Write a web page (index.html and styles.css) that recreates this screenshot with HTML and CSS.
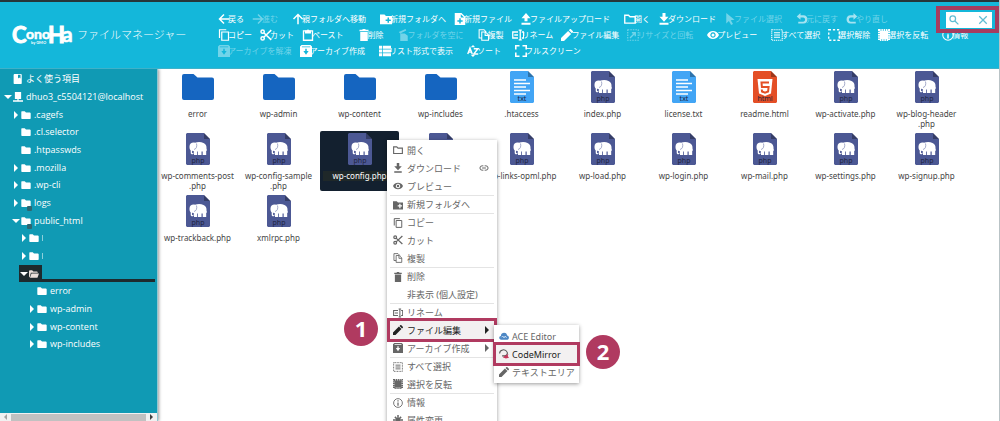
FILE: index.html
```html
<!DOCTYPE html>
<html lang="ja">
<head>
<meta charset="utf-8">
<title>ファイルマネージャー</title>
<link rel="stylesheet" href="styles.css">
</head>
<body>
<svg class="sprite" aria-hidden="true">
  <symbol id="back" viewBox="0 0 16 16"><path d="M15 8H2M8 2L2 8l6 6" fill="none" stroke="currentColor" stroke-width="2"/></symbol>
  <symbol id="fwd" viewBox="0 0 16 16"><path d="M1 8h13M8 2l6 6-6 6" fill="none" stroke="currentColor" stroke-width="2"/></symbol>
  <symbol id="up" viewBox="0 0 16 16"><path d="M8 15V2M2 8l6-6 6 6" fill="none" stroke="currentColor" stroke-width="2"/></symbol>
  <symbol id="newfolder" viewBox="0 0 16 16"><path fill-rule="evenodd" d="M0 2h6l2 2h8v11H0zM10 6v2.500H7.500v2H10V13h2v-2.500h2.500v-2H12V6z"/></symbol>
  <symbol id="newfile" viewBox="0 0 16 16"><path fill-rule="evenodd" d="M1 0h9l5 5v11H1zM9 1.500V6h4.500zM7 7v2.500H4.500v2H7V14h2v-2.500h2.500v-2H9V7z"/></symbol>
  <symbol id="upload" viewBox="0 0 16 16"><path d="M8 0l6 7h-4v4H6V7H2zM2 13h12v2.500H2z"/></symbol>
  <symbol id="download" viewBox="0 0 16 16"><path d="M6 0h4v5h4l-6 6.500L2 5h4zM2 13h12v2.500H2z"/></symbol>
  <symbol id="open" viewBox="0 0 16 16"><path d="M1 13.500V3h5l2 2h7v8.500z" fill="none" stroke="currentColor" stroke-width="1.800"/></symbol>
  <symbol id="cursor" viewBox="0 0 16 16"><path d="M3 0l11 9-5 .5 3 5-2.500 1.500-3-5.500L3 14z"/></symbol>
  <symbol id="undo" viewBox="0 0 16 16"><path d="M6 0v3h4c7 0 7 11 0 11H3v-2.500h6.500c3.500 0 3.500-5.500 0-5.500H6v3L1 4.500z"/></symbol>
  <symbol id="redo" viewBox="0 0 16 16"><path d="M10 0v3H6c-7 0-7 11 0 11h7v-2.500H6.500C3 11.500 3 6 6.500 6H10v3l5-4.500z"/></symbol>
  <symbol id="copy" viewBox="0 0 16 16"><path d="M5 4h9v11H5zM2 12V1h9" fill="none" stroke="currentColor" stroke-width="1.600"/></symbol>
  <symbol id="cut" viewBox="0 0 16 16"><g fill="none" stroke="currentColor" stroke-width="2"><circle cx="3.500" cy="3.500" r="2.200"/><circle cx="3.500" cy="12.500" r="2.200"/><path d="M5 5l10 9.500M5 11L15 1.500"/></g></symbol>
  <symbol id="paste" viewBox="0 0 16 16"><path d="M2 2.500h12V15H2z" fill="none" stroke="currentColor" stroke-width="1.800"/><path d="M4 2h2.500a1.500 1.500 0 0 1 3 0H12v4H4z"/></symbol>
  <symbol id="trash" viewBox="0 0 16 16"><path d="M2 1h3.500l1-1h3l1 1H14v2H2zM3 4h10v12H3z"/></symbol>
  <symbol id="empty" viewBox="0 0 16 16"><path d="M1 4l9-4 1 2-8 4zM3 6h6l4 3v7H3z"/></symbol>
  <symbol id="dup" viewBox="0 0 16 16"><path d="M5 12H1.500V1H8l3 3M5 4h5l4 4v7H5zM9.500 4v4.500H14" fill="none" stroke="currentColor" stroke-width="1.400"/></symbol>
  <symbol id="rename" viewBox="0 0 16 16"><path d="M8 4H1v8h7M3 8h5M9 1.500h4M9 14.500h4M11 1.500v13M13 4h2.500v8H13" fill="none" stroke="currentColor" stroke-width="1.700"/></symbol>
  <symbol id="pencil" viewBox="0 0 16 16"><path d="M0 16v-4L9.500 2.500l4 4L4 16zM10.500 1.500L12 0h1l3 3v1l-1.500 1.500z"/></symbol>
  <symbol id="resize" viewBox="0 0 16 16"><path d="M1 1h14v14H1z" fill="none" stroke="currentColor" stroke-width="1.500" stroke-dasharray="2 1.400"/><path d="M4 12l7-7M6.500 5H11v4.500" fill="none" stroke="currentColor" stroke-width="1.800"/></symbol>
  <symbol id="eye" viewBox="0 0 16 16"><path fill-rule="evenodd" d="M0 8c3-7 13-7 16 0-3 7-13 7-16 0zM8 4.400a3.600 3.600 0 1 0 .01 0z"/><circle cx="8" cy="8" r="2"/></symbol>
  <symbol id="selall" viewBox="0 0 16 16"><path d="M1 1h14v14H1z" fill="none" stroke="currentColor" stroke-width="1.500" stroke-dasharray="1.500 1"/><path d="M4 5h8M4 8h8M4 11h8" stroke="currentColor" stroke-width="1.500"/></symbol>
  <symbol id="selnone" viewBox="0 0 16 16"><path d="M1 1h14v14H1z" fill="none" stroke="currentColor" stroke-width="1.800" stroke-dasharray="3 2.500"/></symbol>
  <symbol id="selinv" viewBox="0 0 16 16"><path d="M2.500 2.500h11v11h-11z"/><path d="M1.500 1.500h13v13h-13z" fill="none" stroke="currentColor" stroke-width="3" stroke-dasharray="2 1"/></symbol>
  <symbol id="info" viewBox="0 0 16 16"><circle cx="8" cy="8" r="7" fill="none" stroke="currentColor" stroke-width="1.400"/><path d="M7 3.500h2v2H7zM7 7h2v5.500H7z"/></symbol>
  <symbol id="archive" viewBox="0 0 16 16"><path fill-rule="evenodd" d="M2 0h12l2 2v14H0V2zM2.500 2v1h11V2zM7 5v3H4.500L8 13l3.500-5H9V5z"/></symbol>
  <symbol id="list" viewBox="0 0 16 16"><path d="M0 1h4v4H0zM5 1h11v4H5zM0 6h4v4H0zM5 6h11v4H5zM0 11h4v4H0zM5 11h11v4H5z"/></symbol>
  <symbol id="sort" viewBox="0 0 16 16"><path d="M1 12L4 4l3 8M2 9.500h4M9 5h5.500L9 12h6" fill="none" stroke="currentColor" stroke-width="1.900"/><path d="M8 0l3 3H5zM8 16l3-3H5z"/></symbol>
  <symbol id="full" viewBox="0 0 16 16"><path d="M1 6V1h5M10 1h5v5M15 10v5h-5M6 15H1v-5" fill="none" stroke="currentColor" stroke-width="2.200"/></symbol>
  <symbol id="attr" viewBox="0 0 16 16"><path d="M8 0v16M0 8h16M3 3l10 10M13 3L3 13" stroke="currentColor" stroke-width="2.400"/></symbol>
  <symbol id="link" viewBox="0 0 16 16"><path d="M7 4.500H5a3.500 3.500 0 0 0 0 7h2M9 4.500h2a3.500 3.500 0 0 1 0 7H9M5 8h6" fill="none" stroke="currentColor" stroke-width="1.600"/></symbol>
  <symbol id="folder" viewBox="0 0 16 16"><path d="M1 2h5l2 2h6.500l1 1v8.500l-1 1H1.500l-1-1V3z"/></symbol>
  <symbol id="folderopen" viewBox="0 0 16 16"><path d="M0 3l1-1h4l2 2h6l1 1v1H3L1 13H0zM4 7h12l-2.500 7H1.500z"/></symbol>
  <symbol id="book" viewBox="0 0 16 16"><path fill-rule="evenodd" d="M2 0h11l1 1v14l-1 1H2l-1-1V1zM8 1v6l2-1.500L12 7V1z"/></symbol>
  <symbol id="server" viewBox="0 0 16 16"><path d="M3 0h10v11H3zM7 11h2v2h7v2.500H0V13h7z"/></symbol>
  <symbol id="bigfolder" viewBox="0 0 32 26"><path d="M2 0h9.500l4 3.500H30a2 2 0 0 1 2 2V24a2 2 0 0 1-2 2H2a2 2 0 0 1-2-2V2a2 2 0 0 1 2-2z"/></symbol>
  <symbol id="page" viewBox="0 0 24 32"><path d="M1 0h17l6 6v25l-1 1H1l-1-1V1z"/><path d="M18 0v6h6z" fill="#000" opacity=".3"/></symbol>
  <symbol id="php" viewBox="0 0 24 32"><use href="#page"/><path fill="#fff" d="M3.500 13.500C3.500 10.500 6 9 9 9.700c2.500-.8 6-.9 8.500.2 2.500 1 3.200 3.200 3 5.600l.5 2-.8.300V22h-3.500v-3.500h-1.200V22H12v-3.500h-.8V22H8v-3.800c-1.200.2-1.600-.3-2-1v2.300c0 1 1 .8 1 .1l.7.2c-.2 2.200-3 2-3-.1v-2.300c-1.200-1-1.200-2.500-1.200-3.900z"/><path d="M10.500 10.500c.8 3-.2 5.500-2.500 6" fill="none" stroke="#4c5894" stroke-width=".5"/><text class="ext" x="12" y="29.500">php</text></symbol>
  <symbol id="txt" viewBox="0 0 24 32"><use href="#page"/><path d="M4 9h12M4 12.500h16M4 16h12M4 19.500h16M4 23h12" stroke="#fff" stroke-width="1.600"/><text class="ext" x="12" y="29.500">txt</text></symbol>
  <symbol id="html" viewBox="0 0 24 32"><use href="#page"/><path fill="#fff" d="M4.500 8h15L18 22.500 12 25l-6-2.500z"/><path d="M16 11.500H8.500l.4 4.500h6.700l-.5 4.500-3.100 1.200-3-1.200-.2-2" fill="none" stroke="#e44f26" stroke-width="2"/><text class="ext" x="12" y="29.500">html</text></symbol>
  <symbol id="cloud" viewBox="0 0 16 16"><path d="M3 14C-1 13 0 8 3 8c0-6 9-7 10-1 4 1 4 7-1 7z" fill="#4d87c4"/><path d="M4 10l2-2 2 3 2-3 2 3" fill="none" stroke="#dcebfa" stroke-width="1.300"/></symbol>
  <symbol id="mirror" viewBox="0 0 16 16"><path d="M1 7C1 1 10-1 13 5c1 3 0 5-3 6H5" fill="none" stroke="#555" stroke-width="1.700"/><path d="M9 11l6-3-1 3 2 3-5 1-5-2z" fill="#c5375b"/></symbol>
</svg>

<div class="app">
  <header class="header">
    <div class="brand">
      <svg class="logo" viewBox="0 0 60 20" role="img" aria-label="ConoHa by GMO">
        <text class="logo-c" x="-1" y="18">C</text>
        <text class="logo-ono" x="13" y="14">ono</text>
        <text class="logo-h" x="35" y="18">H</text>
        <text class="logo-a" x="49" y="17">a</text>
        <text class="logo-by" x="18" y="19">by GMO</text>
      </svg>
      <h1 class="title">ファイルマネージャー</h1>
    </div>
    <div class="toolbar" role="toolbar">
      <div class="group"><button class="tool"><svg><use href="#back"/></svg>戻る</button><button class="tool" disabled><svg><use href="#fwd"/></svg>進む</button></div>
      <div class="group"><button class="tool"><svg><use href="#up"/></svg>親フォルダへ移動</button></div>
      <div class="group"><button class="tool"><svg><use href="#newfolder"/></svg>新規フォルダへ</button><button class="tool"><svg><use href="#newfile"/></svg>新規ファイル</button><button class="tool"><svg><use href="#upload"/></svg>ファイルアップロード</button></div>
      <div class="group"><button class="tool"><svg><use href="#open"/></svg>開く</button><button class="tool"><svg><use href="#download"/></svg>ダウンロード</button><button class="tool" disabled><svg><use href="#cursor"/></svg>ファイル選択</button></div>
      <div class="group"><button class="tool" disabled><svg class="strong"><use href="#undo"/></svg>元に戻す</button><button class="tool" disabled><svg class="strong"><use href="#redo"/></svg>やり直し</button></div>
      <div class="group"><button class="tool"><svg><use href="#copy"/></svg>コピー</button><button class="tool"><svg><use href="#cut"/></svg>カット</button><button class="tool"><svg><use href="#paste"/></svg>ペースト</button></div>
      <div class="group"><button class="tool"><svg><use href="#trash"/></svg>削除</button></div>
      <div class="group"><button class="tool" disabled><svg><use href="#empty"/></svg>フォルダを空に</button></div>
      <div class="group"><button class="tool"><svg><use href="#dup"/></svg>複製</button><button class="tool"><svg><use href="#rename"/></svg>リネーム</button><button class="tool"><svg><use href="#pencil"/></svg>ファイル編集</button><button class="tool" disabled><svg><use href="#resize"/></svg>リサイズと回転</button></div>
      <div class="group"><button class="tool"><svg><use href="#eye"/></svg>プレビュー</button></div>
      <div class="group"><button class="tool"><svg><use href="#selall"/></svg>すべて選択</button><button class="tool"><svg><use href="#selnone"/></svg>選択解除</button><button class="tool"><svg><use href="#selinv"/></svg>選択を反転</button></div>
      <div class="group"><button class="tool"><svg><use href="#info"/></svg>情報</button></div>
      <div class="group"><button class="tool" disabled><svg><use href="#archive"/></svg>アーカイブを解凍</button><button class="tool"><svg><use href="#archive"/></svg>アーカイブ作成</button></div>
      <div class="group"><button class="tool"><svg><use href="#list"/></svg>リスト形式で表示</button></div>
      <div class="group"><button class="tool"><svg><use href="#sort"/></svg>ソート</button></div>
      <div class="group"><button class="tool"><svg><use href="#full"/></svg>フルスクリーン</button></div>
    </div>
    <div class="search-frame">
      <div class="search">
        <svg viewBox="0 0 16 16"><circle cx="6" cy="6" r="4.500"/><path d="M9.500 9.500L15 15"/></svg>
        <input type="text" aria-label="検索">
        <button aria-label="クリア"><svg viewBox="0 0 16 16"><path d="M2 2l12 12M14 2L2 14"/></svg></button>
      </div>
    </div>
  </header>

  <div class="body">
    <nav class="sidebar">
      <ul class="tree">
        <li class="d0"><i></i><svg><use href="#book"/></svg><a href="#">よく使う項目</a></li>
        <li class="d0"><i class="open"></i><svg><use href="#server"/></svg><a href="#">dhuo3_c5504121@localhost</a></li>
        <li class="d1"><i class="shut"></i><svg><use href="#folder"/></svg><a href="#">.cagefs</a></li>
        <li class="d1"><i></i><svg><use href="#folder"/></svg><a href="#">.cl.selector</a></li>
        <li class="d1"><i></i><svg><use href="#folder"/></svg><a href="#">.htpasswds</a></li>
        <li class="d1"><i class="shut"></i><svg><use href="#folder"/></svg><a href="#">.mozilla</a></li>
        <li class="d1"><i class="shut"></i><svg><use href="#folder"/></svg><a href="#">.wp-cli</a></li>
        <li class="d1"><i class="shut"></i><span class="locked"><svg><use href="#folder"/></svg><b></b></span><a href="#">logs</a></li>
        <li class="d1"><i class="open"></i><span class="locked"><svg><use href="#folder"/></svg><b></b></span><a href="#">public_html</a></li>
        <li class="d2"><i class="shut"></i><svg><use href="#folder"/></svg><span class="stub"></span></li>
        <li class="d2"><i class="shut"></i><svg><use href="#folder"/></svg><span class="stub"></span></li>
        <li class="d2 current"><i class="open"></i><svg><use href="#folderopen"/></svg><span class="cover"></span></li>
        <li class="d3"><i></i><svg><use href="#folder"/></svg><a href="#">error</a></li>
        <li class="d3"><i class="shut"></i><svg><use href="#folder"/></svg><a href="#">wp-admin</a></li>
        <li class="d3"><i class="shut"></i><svg><use href="#folder"/></svg><a href="#">wp-content</a></li>
        <li class="d3"><i class="shut"></i><svg><use href="#folder"/></svg><a href="#">wp-includes</a></li>
      </ul>
      <div class="scrollbar"><i class="left"></i><span></span><i class="right"></i></div>
    </nav>

    <main class="files">
      <div class="file"><svg class="dir"><use href="#bigfolder"/></svg><span>error</span></div>
      <div class="file"><svg class="dir"><use href="#bigfolder"/></svg><span>wp-admin</span></div>
      <div class="file"><svg class="dir"><use href="#bigfolder"/></svg><span>wp-content</span></div>
      <div class="file"><svg class="dir"><use href="#bigfolder"/></svg><span>wp-includes</span></div>
      <div class="file"><svg class="txt"><use href="#txt"/></svg><span>.htaccess</span></div>
      <div class="file"><svg class="php"><use href="#php"/></svg><span>index.php</span></div>
      <div class="file"><svg class="txt"><use href="#txt"/></svg><span>license.txt</span></div>
      <div class="file"><svg class="html"><use href="#html"/></svg><span>readme.html</span></div>
      <div class="file"><svg class="php"><use href="#php"/></svg><span>wp-activate.php</span></div>
      <div class="file"><svg class="php"><use href="#php"/></svg><span>wp-blog-header<br>.php</span></div>
      <div class="file"><svg class="php"><use href="#php"/></svg><span>wp-comments-post<br>.php</span></div>
      <div class="file"><svg class="php"><use href="#php"/></svg><span>wp-config-sample<br>.php</span></div>
      <div class="file selected"><svg class="php"><use href="#php"/></svg><span>wp-config.php</span></div>
      <div class="file"><svg class="php"><use href="#php"/></svg><span>wp-cron.php</span></div>
      <div class="file"><svg class="php"><use href="#php"/></svg><span>wp-links-opml.php</span></div>
      <div class="file"><svg class="php"><use href="#php"/></svg><span>wp-load.php</span></div>
      <div class="file"><svg class="php"><use href="#php"/></svg><span>wp-login.php</span></div>
      <div class="file"><svg class="php"><use href="#php"/></svg><span>wp-mail.php</span></div>
      <div class="file"><svg class="php"><use href="#php"/></svg><span>wp-settings.php</span></div>
      <div class="file"><svg class="php"><use href="#php"/></svg><span>wp-signup.php</span></div>
      <div class="file"><svg class="php"><use href="#php"/></svg><span>wp-trackback.php</span></div>
      <div class="file"><svg class="php"><use href="#php"/></svg><span>xmlrpc.php</span></div>
    </main>
  </div>

  <div class="menu context">
    <button><svg><use href="#open"/></svg>開く</button>
    <button><svg><use href="#download"/></svg>ダウンロード<svg class="end"><use href="#link"/></svg></button>
    <button><svg><use href="#eye"/></svg>プレビュー</button>
    <button class="sep"><svg><use href="#newfolder"/></svg>新規フォルダへ</button>
    <button class="sep"><svg><use href="#copy"/></svg>コピー</button>
    <button><svg><use href="#cut"/></svg>カット</button>
    <button><svg><use href="#dup"/></svg>複製</button>
    <button class="sep"><svg><use href="#trash"/></svg>削除</button>
    <button><svg></svg>非表示 (個人設定)</button>
    <button class="sep"><svg><use href="#rename"/></svg>リネーム</button>
    <button class="marked"><svg><use href="#pencil"/></svg>ファイル編集<i class="more"></i></button>
    <button><svg><use href="#archive"/></svg>アーカイブ作成<i class="more"></i></button>
    <button class="sep"><svg><use href="#selall"/></svg>すべて選択</button>
    <button><svg><use href="#selinv"/></svg>選択を反転</button>
    <button class="sep"><svg><use href="#info"/></svg>情報</button>
    <button><svg><use href="#attr"/></svg>属性変更</button>
  </div>
  <div class="menu submenu">
    <button><svg><use href="#cloud"/></svg>ACE Editor</button>
    <button class="marked"><svg><use href="#mirror"/></svg>CodeMirror</button>
    <button><svg><use href="#pencil"/></svg>テキストエリア</button>
  </div>
  <div class="step step-1">1</div>
  <div class="step step-2">2</div>
</div>
</body>
</html>
```
FILE: styles.css
```css
* { box-sizing: border-box; }
body {
  margin: 0;
  font-family: "Noto Sans", "Noto Sans CJK JP", sans-serif;
  font-size: 8px;
}
svg { display: block; flex: none; fill: currentColor; }
button { margin: 0; padding: 0; border: 0; background: none; color: inherit; font: inherit; }
.sprite { position: absolute; width: 0; height: 0; }

.app {
  position: relative;
  display: flex;
  flex-direction: column;
  height: 100vh;
  overflow: hidden;
  background: #fff;
  border-right: 1px solid #b9c3c6;
}

/* header */
.header {
  position: relative;
  display: flex;
  align-items: center;
  flex: none;
  padding: 9px 16px 9px 13px;
  border-top: 2px solid #26363a;
  border-bottom: 1px solid #3fb2c9;
  background: #14b7da;
  color: #fff;
}
.brand { display: flex; align-items: center; flex: none; width: 205px; gap: 4px; }
.logo { width: 60px; height: 20px; overflow: visible; font-family: Lato, sans-serif; font-weight: 700; stroke: currentColor; }
.logo-c { font-size: 22px; stroke-width: 1; }
.logo-ono { font-size: 14px; stroke-width: .6; }
.logo-h { font-size: 22px; stroke-width: 1; }
.logo-a { font-size: 21px; stroke-width: .6; }
.logo-by { font-size: 4px; stroke: none; }
.title { margin: 0; font-size: 11px; font-weight: 300; line-height: 16px; white-space: nowrap; }
.toolbar { display: flex; flex-wrap: wrap; column-gap: 14px; }
.group { display: flex; gap: 8px; }
.tool { display: flex; align-items: center; height: 16px; line-height: 16px; white-space: nowrap; }
.tool svg { width: 12px; height: 12px; margin-right: -2px; }
.tool:disabled { color: #72d4e9; }
.tool .strong { color: #a5e3f1; }
.search-frame {
  position: absolute;
  top: 4px;
  right: 0;
  padding: 2px 3px 1px 6px;
  border: 4px solid #a63d5f;
}
.search { display: flex; align-items: center; width: 46px; height: 16px; padding: 0 4px 0 3px; background: #fff; color: #5fbdd3; }
.search svg { width: 10px; height: 10px; fill: none; stroke: currentColor; stroke-width: 2; }
.search input { flex: 1; min-width: 0; width: 0; height: 14px; padding: 0; border: 0; outline: 0; font: inherit; }

/* layout */
.body { display: flex; flex: 1; min-height: 0; }
.sidebar {
  z-index: 1;
  display: flex;
  flex-direction: column;
  justify-content: space-between;
  flex: none;
  width: 158px;
  border-right: 1px solid #8fc6d1;
  background: #109ab4;
  box-shadow: 1px 0 3px rgba(0, 0, 0, .4);
  clip-path: inset(0 -6px 0 0);
  color: #fff;
}

/* folder tree */
.tree { margin: 0; padding: 1px 2px 0 0; list-style: none; font-family: "Open Sans", "Noto Sans CJK JP", sans-serif; font-size: 9px; }
.tree li { display: flex; align-items: center; height: 18px; line-height: 18px; white-space: nowrap; }
.tree li:nth-child(3n) { height: 17px; }
.tree a { color: inherit; text-decoration: none; }
.tree svg { width: 10px; height: 10px; margin-right: 3px; }
.tree i { flex: none; width: 9px; }
.d0 { padding-left: 4px; }
.d1 { padding-left: 12px; }
.d2 { padding-left: 20px; }
.d3 { padding-left: 28px; }
.tree .shut::before { content: ""; display: block; width: 0; margin-left: 2px; border: solid transparent; border-width: 4px 0 4px 4px; border-left-color: #fff; }
.tree .open::before { content: ""; display: block; width: 0; border: solid transparent; border-width: 4px 4px 0; border-top-color: #fff; }
.locked { position: relative; }
.locked b { position: absolute; right: 2px; bottom: -3px; width: 5px; height: 5px; background: #2f6670; border-radius: 1px; }
.stub { width: 1px; height: 6px; background: #8ccfdb; }
.tree .current { margin-left: 19px; padding-left: 1px; background: #1e2a2e; }
.current svg { color: #eadfda; }
.cover { flex: 1; align-self: flex-start; height: 14px; background: #109ab4; }

.scrollbar { display: flex; align-items: center; gap: 4px; height: 8px; padding: 0 4px; background: #f1f1f1; }
.scrollbar span { flex: 1; height: 7px; background: #c1c1c1; }
.scrollbar i { width: 0; border: solid transparent; border-width: 3px 0; }
.scrollbar .left { border-right: 3px solid #a3a3a3; }
.scrollbar .right { border-left: 3px solid #404040; }

/* files */
.files { display: flex; flex-wrap: wrap; align-content: flex-start; flex: 1; gap: 2px; }
.file {
  display: flex;
  flex-direction: column;
  align-items: center;
  gap: 6px;
  width: 79px;
  min-height: 60px;
  padding-top: 2px;
  border-radius: 2px;
  color: #444;
  line-height: 10px;
  text-align: center;
  white-space: nowrap;
}
.file svg { width: 24px; height: 32px; }
.file .dir { width: 32px; padding: 3px 0; color: #1565c0; }
.file .php { color: #4c5894; }
.file .txt { color: #42a5f5; }
.file .html { color: #e44f26; }
.ext { fill: #20243f; font-size: 7px; text-anchor: middle; }
.selected { background: #13202f; color: #fff; }
.selected span { align-self: stretch; margin: 0 3px; background: #1f2829; }

/* menus */
.menu { position: absolute; z-index: 2; background: #fff; box-shadow: 0 1px 4px rgba(0, 0, 0, .4); color: #666; font-size: 9px; }
.menu button { display: flex; align-items: center; gap: 4px; width: 100%; height: 18px; line-height: 17px; white-space: nowrap; }
.menu svg { width: 10px; height: 10px; }
.menu .sep { border-top: 1px solid #e4e4e4; }
.menu .end { margin-left: auto; }
.menu .more { margin-left: auto; border: solid transparent; border-width: 4px 0 4px 4px; border-left-color: currentColor; }
.menu .marked { background: #f3f0f1; color: #222; outline: 3px solid #b03a60; }
.context { top: 140px; left: 387px; width: 110px; padding: 1px 3px; }
.context button { padding: 0 5px 0 3px; }
.submenu { top: 325px; left: 494px; width: 85px; padding: 2px; }
.submenu button { gap: 3px; padding: 0 0 0 3px; }

.step {
  position: absolute;
  z-index: 3;
  width: 34px;
  height: 34px;
  border-radius: 50%;
  background: #b03a60;
  color: #fff;
  font: 700 22px/33px "Open Sans", sans-serif;
  text-align: center;
}
.step-1 { top: 312px; left: 344px; }
.step-2 { top: 335px; left: 586px; }
```
